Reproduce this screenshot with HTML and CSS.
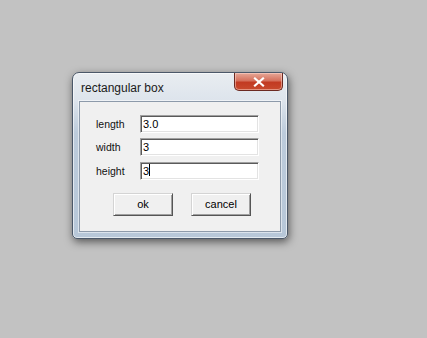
FILE: index.html
```html
<!DOCTYPE html>
<html lang="en">
<head>
    <meta charset="UTF-8">
    <title>rectangular box</title>
    <link rel="stylesheet" href="styles.css">
</head>
<body>
    <div class="window">
        <div class="titlebar">
            <span class="title">rectangular box</span>
            <button class="close" type="button">
                <svg width="12" height="10" viewBox="0 0 12 10">
                    <path d="M2 1.5 L10 8.5 M10 1.5 L2 8.5" stroke="#fff" stroke-width="2.2" stroke-linecap="square"/>
                </svg>
            </button>
        </div>
        <div class="client">
            <form class="fields">
                <label for="length">length</label>
                <input id="length" type="text" value="3.0">
                <label for="width">width</label>
                <input id="width" type="text" value="3">
                <label for="height">height</label>
                <div class="field-focus">
                    <input id="height" type="text" value="3">
                    <span class="caret"></span>
                </div>
            </form>
            <div class="actions">
                <button class="btn" type="button">ok</button>
                <button class="btn" type="button">cancel</button>
            </div>
        </div>
    </div>
</body>
</html>
```

FILE: styles.css
```css
body {
    margin: 0;
    padding: 72px 0 0 72px;
    background-color: #c2c2c2;
    font-family: "Liberation Sans", Arial, sans-serif;
    height: 338px;
    box-sizing: border-box;
}
.window {
    width: 216px;
    height: 167px;
    box-sizing: border-box;
    border: 1px solid #4b5869;
    border-radius: 7px 7px 5px 5px;
    background: linear-gradient(to bottom, #e9edf1 0, #dde4ec 28px, #bccbdb 60px, #b7c7d8 100%);
    box-shadow: 1px 3px 8px rgba(0, 0, 0, 0.55), inset 0 0 0 1px rgba(255, 255, 255, 0.6);
    padding: 0 6px 6px 6px;
    display: flex;
    flex-direction: column;
}
.titlebar {
    height: 28px;
    display: flex;
    align-items: flex-start;
    justify-content: space-between;
    margin-right: -2px;
    margin-left: 2px;
}
.title {
    font-size: 12px;
    color: #1a1a1a;
    margin-top: 8px;
}
/* close button */
.close {
    width: 49px;
    height: 18px;
    padding: 0;
    border: 1px solid #6b2a22;
    border-top: none;
    border-radius: 0 0 5px 5px;
    background: linear-gradient(to bottom, #e6a898 0, #d5705c 45%, #c23a22 55%, #c84a2e 100%);
    box-shadow: inset 0 0 0 1px rgba(255, 220, 210, 0.5);
    display: flex;
    align-items: center;
    justify-content: center;
}
.client {
    flex: 1;
    background-color: #f0f0f0;
    border: 1px solid #8d9aaa;
    box-shadow: 0 0 0 1px rgba(255, 255, 255, 0.5);
    padding: 13px 0 0 16px;
}
.fields {
    display: grid;
    grid-template-columns: 44px 119px;
    row-gap: 5px;
    align-items: center;
    margin: 0;
}
label {
    font-size: 10.5px;
    color: #111;
}
input {
    width: 119px;
    height: 18px;
    box-sizing: border-box;
    margin: 0;
    padding: 0 0 0 2px;
    font-family: "Liberation Sans", Arial, sans-serif;
    font-size: 11px;
    color: #000;
    background: #fff;
    border: 1px solid;
    border-color: #a0a0a0 #fff #fff #a0a0a0;
    box-shadow: inset 1px 1px 0 #5a5a5a, inset -1px -1px 0 #e3e3e3;
    outline: none;
}
.field-focus {
    position: relative;
}
.caret {
    position: absolute;
    left: 9px;
    top: 3px;
    width: 1px;
    height: 12px;
    background: #000;
}
.actions {
    display: flex;
    gap: 18px;
    padding-left: 17px;
    margin-top: 13px;
}
.btn {
    width: 60px;
    height: 23px;
    box-sizing: border-box;
    padding: 0 0 1px 0;
    font-family: "Liberation Sans", Arial, sans-serif;
    font-size: 11px;
    color: #000;
    background: #f0f0f0;
    border: 1px solid;
    border-color: #d4d4d4 #555 #555 #d4d4d4;
    box-shadow: inset 1px 1px 0 #fff, inset -1px -1px 0 #a0a0a0;
}
```
